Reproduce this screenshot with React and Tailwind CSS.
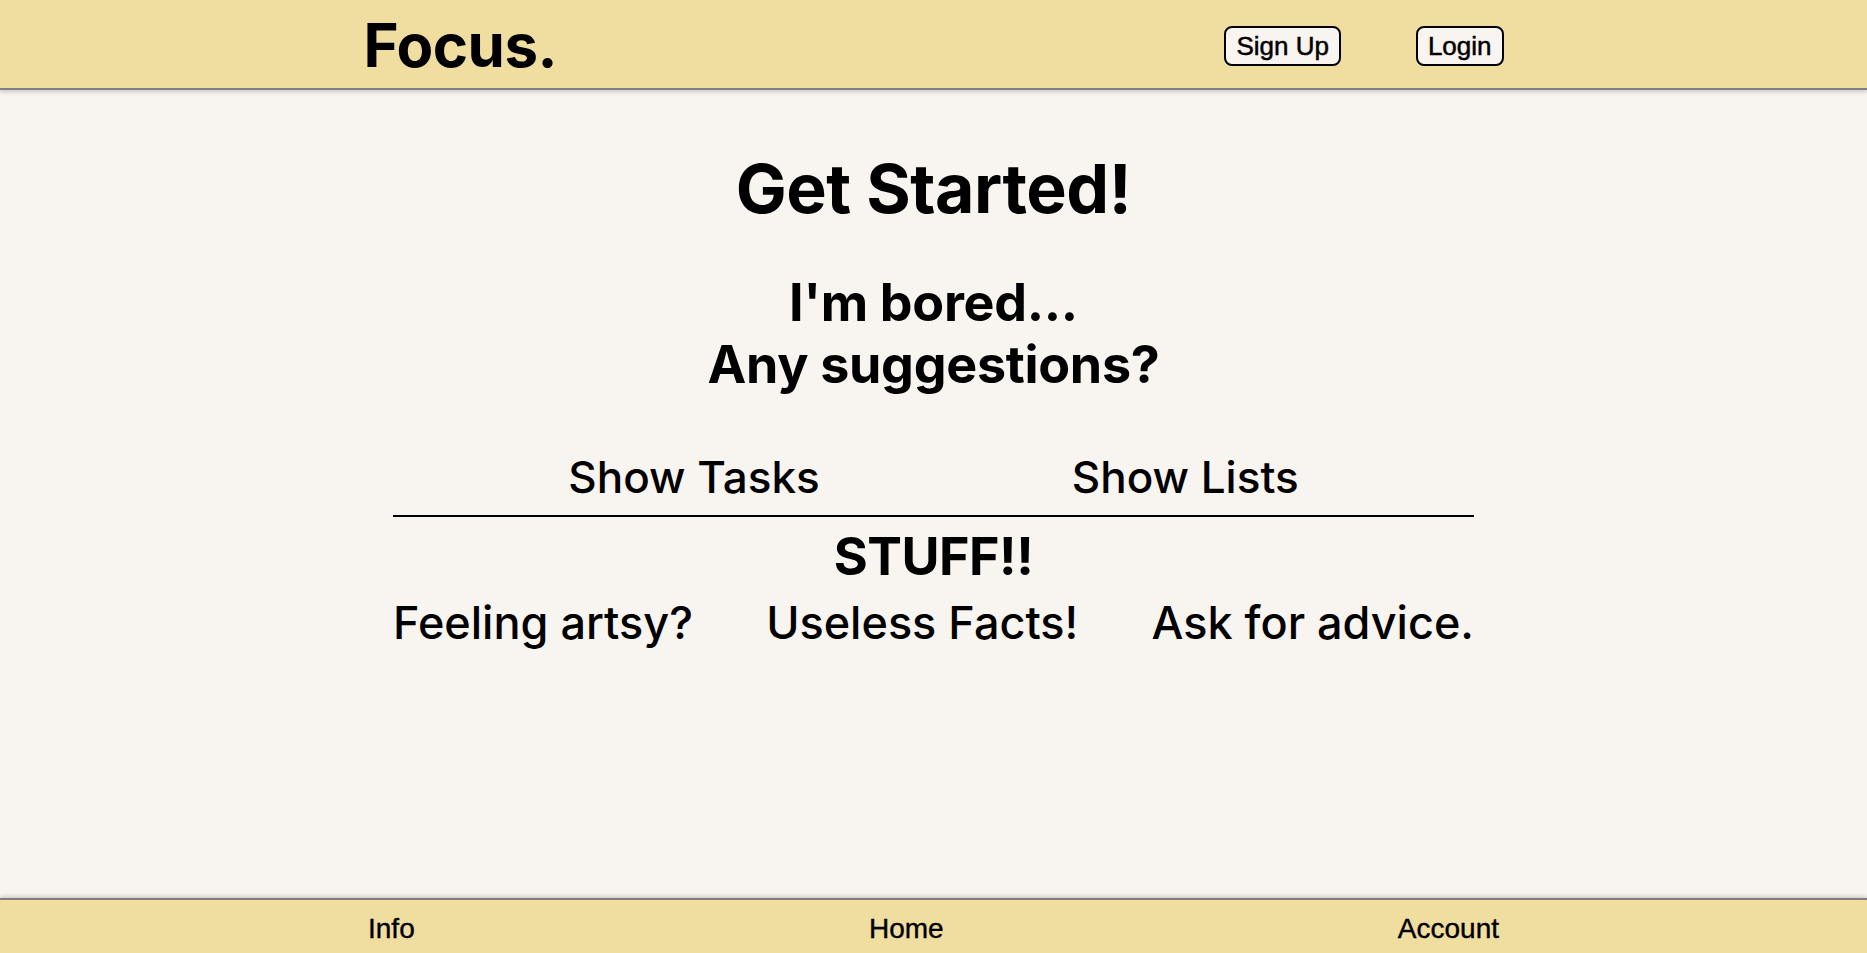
const TITLE = { fontFamily: 'Inter, "Noto Sans", sans-serif' };
const ARIAL = { fontFamily: '"Liberation Sans", Arial, sans-serif' };

const stuff = ['Feeling artsy?', 'Useless Facts!', 'Ask for advice.'];
const footerLinks = ['Info', 'Home', 'Account'];

function Header() {
  return (
    <header className="h-[90px] shrink-0 bg-[#f0dda0] border-b-2 border-[#7f7f7f] shadow-[0_2px_4px_rgba(0,0,0,0.18)] relative z-10">
      <div className="w-[1140px] mx-auto h-full flex items-center justify-between">
        <div className="text-[60px] font-bold leading-none text-black tracking-[-0.5px] mt-[2px]" style={TITLE}>
          Focus.
        </div>
        <div className="flex items-center gap-[75px] mt-[4px]" style={ARIAL}>
          <button className="h-[40px] px-[10px] text-[26px] leading-none text-black bg-[#f8f4f0] border-2 border-black rounded-[8px] [-webkit-text-stroke:0.5px_black]">
            Sign Up
          </button>
          <button className="h-[40px] px-[10px] text-[26px] leading-none text-black bg-[#f8f4f0] border-2 border-black rounded-[8px] [-webkit-text-stroke:0.5px_black]">
            Login
          </button>
        </div>
      </div>
    </header>
  );
}

function Footer() {
  return (
    <footer className="h-[55px] shrink-0 mt-auto bg-[#f0dda0] border-t-2 border-[#7f7f7f] shadow-[0_-2px_4px_rgba(0,0,0,0.15)]">
      <div className="w-[1131px] mx-auto h-full flex items-center justify-between pt-[4px]" style={ARIAL}>
        {footerLinks.map((l) => (
          <a key={l} className="text-[28px] leading-none text-black [-webkit-text-stroke:0.4px_black]">
            {l}
          </a>
        ))}
      </div>
    </footer>
  );
}

export default function App() {
  return (
    <div className="min-h-screen flex flex-col bg-[#f8f4f0] text-black">
      <Header />

      <main className="flex flex-col items-center" style={TITLE}>
        <h1 className="mt-[64px] text-[68px] leading-[68px] font-bold tracking-[-0.5px]">Get Started!</h1>

        <h2 className="mt-[50px] text-[52px] leading-[62px] font-bold text-center tracking-[-0.3px]">
          I'm bored...
          <br />
          Any suggestions?
        </h2>

        <div className="mt-[59px] flex justify-center gap-[252px] text-[44px] leading-[44px] font-medium">
          <button>Show Tasks</button>
          <button>Show Lists</button>
        </div>

        <div className="mt-[16px] w-[1081px] h-[2px] bg-black" />

        <div className="mt-[14px] text-[52px] leading-[52px] font-bold tracking-[-0.5px]">STUFF!!</div>

        <div className="mt-[17px] w-[1081px] flex justify-between text-[45px] leading-[46px] font-medium">
          {stuff.map((s) => (
            <button key={s}>{s}</button>
          ))}
        </div>
      </main>

      <Footer />
    </div>
  );
}
